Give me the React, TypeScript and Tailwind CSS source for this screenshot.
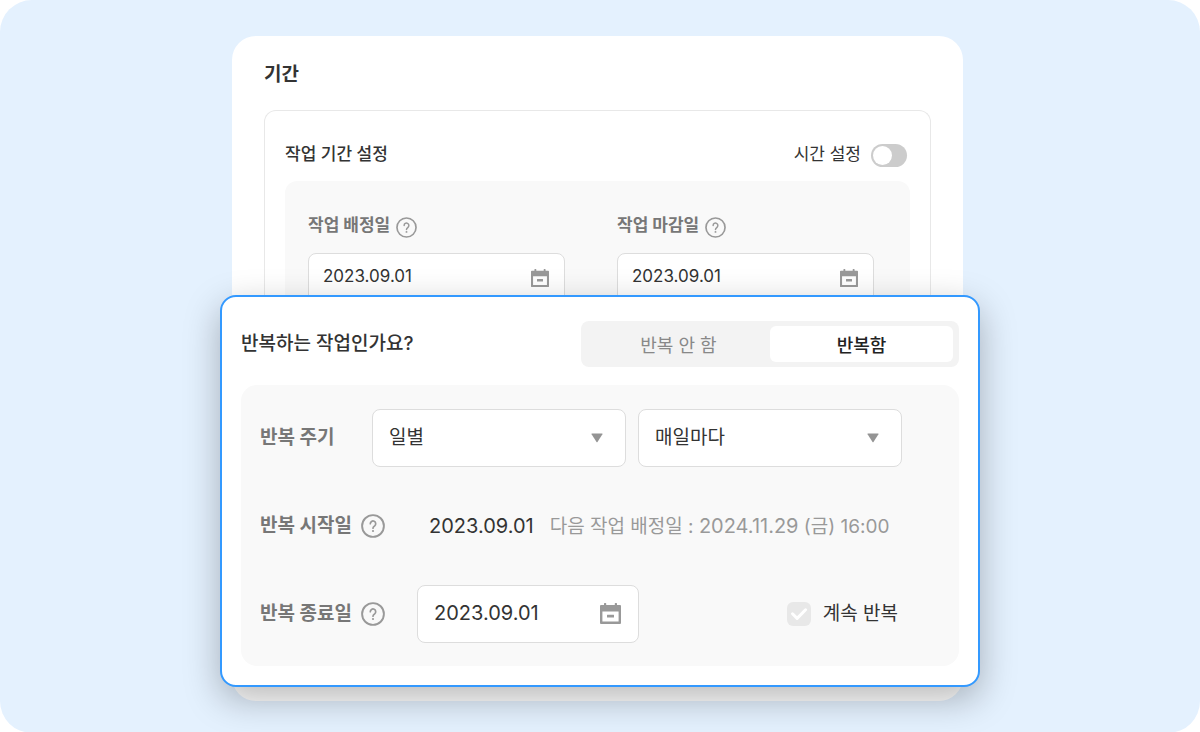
import { useState } from 'react';

function HelpIcon({ className }: { className: string }) {
  return (
    <svg viewBox="0 0 24 24" fill="none" stroke="#999999" className={className}>
      <circle cx="12" cy="12" r="10.9" strokeWidth="1.9" />
      <path
        d="M9.3 9.7a2.7 2.7 0 1 1 4.4 2.1c-1 .8-1.7 1.2-1.7 2.4"
        strokeWidth="1.7"
        strokeLinecap="round"
      />
      <circle cx="12" cy="17" r="1.1" fill="#999999" stroke="none" />
    </svg>
  );
}

function CalendarIcon({ className }: { className: string }) {
  return (
    <svg viewBox="0 0 21 21" fill="#999999" className={className}>
      <path
        fillRule="evenodd"
        d="M4 .6a.6.6 0 0 1 .6-.6h1a.6.6 0 0 1 .6.6V2h8.6V.6a.6.6 0 0 1 .6-.6h1a.6.6 0 0 1 .6.6V2H20a1 1 0 0 1 1 1v17a1 1 0 0 1-1 1H1a1 1 0 0 1-1-1V3a1 1 0 0 1 1-1h3zM2.4 8.6v10h16.2v-10z"
      />
      <rect x="7" y="11.8" width="7" height="2.8" rx="0.3" />
    </svg>
  );
}

function SelectArrow() {
  return (
    <svg
      viewBox="0 0 12 10"
      fill="#949494"
      className="pointer-events-none absolute top-6 right-[23px] h-[10px] w-3"
    >
      <path d="M1 .4h10q.9 0 .4.8L6.5 9q-.5.7-1 0L.6 1.2Q.1.4 1 .4z" />
    </svg>
  );
}

function DateField({ id, label }: { id: string; label: string }) {
  return (
    <div>
      <div className="flex h-6 items-center gap-[6px]">
        <label htmlFor={id} className="pb-1 text-[17px] leading-6 font-bold text-[#777777]">
          {label}
        </label>
        <HelpIcon className="h-[21px] w-[21px]" />
      </div>
      <div className="relative mt-[14px]">
        <input
          id={id}
          type="text"
          defaultValue="2023.09.01"
          className="h-[51px] w-full rounded-lg border border-[#dddddd] bg-white px-[14px] pb-[6px] text-[17px] text-[#333333]"
        />
        <CalendarIcon className="absolute top-4 right-4 h-[18px] w-[18px]" />
      </div>
    </div>
  );
}

const selectClass =
  'h-[58px] w-full appearance-none rounded-lg border border-[#dddddd] bg-white px-4 text-[19px] text-[#333333]';

const segmentClass =
  'h-9 rounded-md pt-[2px] text-[#888888] aria-pressed:bg-white aria-pressed:font-medium aria-pressed:text-[#222222]';

export default function App() {
  const [repeat, setRepeat] = useState(true);

  return (
    <div className="min-h-screen rounded-[32px] bg-[#e4f1fe] px-4 pt-9 pb-8 font-[Inter,'Noto_Sans_CJK_KR',sans-serif] text-[#333333]">
      <div className="mx-auto max-w-[760px]">
        <section className="mr-[17px] ml-3 rounded-3xl bg-white pb-[14px]">
          <div className="px-8 pt-[27px]">
            <h2 className="text-[19px] leading-6 font-bold">기간</h2>
            <div className="mt-[23px] rounded-t-xl border border-b-0 border-[#e8e8e8] px-5">
              <div className="flex h-[70px] items-end justify-between pb-[13px]">
                <h3 className="pb-[2px] text-[17px] leading-6 font-medium">작업 기간 설정</h3>
                <label className="flex items-center gap-[10px] pr-[3px] text-[17px] leading-6">
                  <span className="pb-[2px]">시간 설정</span>
                  <input
                    type="checkbox"
                    role="switch"
                    className="h-[23px] w-9 appearance-none rounded-full bg-[#cccccc] before:mt-[2px] before:ml-[2px] before:block before:h-[19px] before:w-[19px] before:rounded-full before:bg-white checked:bg-[#3399ff] checked:before:ml-[15px]"
                  />
                </label>
              </div>
              <div className="grid grid-cols-2 gap-x-[52px] rounded-t-xl bg-[#f9f9f9] pt-[34px] pr-9 pl-[23px]">
                <DateField id="assign-date" label="작업 배정일" />
                <DateField id="due-date" label="작업 마감일" />
              </div>
            </div>
          </div>

          {/* repeat panel, wider than the card and laid over its lower part */}
          <div className="relative -mt-[9px] -mr-[17px] -ml-3 rounded-2xl border-2 border-[#3399ff] bg-white px-[19px] pt-6 pb-[19px] shadow-[0_12px_36px_rgba(0,0,0,0.28)]">
            <div className="flex items-center justify-between">
              <h3 className="text-[19px] leading-6 font-medium">반복하는 작업인가요?</h3>
              <div className="grid w-[378px] grid-cols-2 rounded-lg bg-[#f3f3f3] px-[6px] py-[5px] text-[18px]">
                <button
                  type="button"
                  aria-pressed={!repeat}
                  onClick={() => setRepeat(false)}
                  className={segmentClass}
                >
                  반복 안 함
                </button>
                <button
                  type="button"
                  aria-pressed={repeat}
                  onClick={() => setRepeat(true)}
                  className={segmentClass}
                >
                  반복함
                </button>
              </div>
            </div>

            <div className="mt-[18px] flex flex-col gap-[30px] rounded-2xl bg-[#f9f9f9] pt-6 pr-[57px] pb-[23px] pl-[19px] text-[19px]">
              <div className="flex items-center">
                <label htmlFor="cycle" className="w-28 font-bold text-[#777777]">
                  반복 주기
                </label>
                <div className="relative w-[254px]">
                  <select id="cycle" className={selectClass}>
                    <option>일별</option>
                  </select>
                  <SelectArrow />
                </div>
                <div className="relative ml-3 flex-1">
                  <select aria-label="반복 간격" className={selectClass}>
                    <option>매일마다</option>
                  </select>
                  <SelectArrow />
                </div>
              </div>

              <div className="flex h-[58px] items-center">
                <div className="flex w-[157px] items-center gap-[9px]">
                  <span className="font-bold text-[#777777]">반복 시작일</span>
                  <HelpIcon className="h-6 w-6" />
                </div>
                <span className="pl-3 text-[20px]">2023.09.01</span>
                <span className="pl-4 text-[#999999]">
                  다음 작업 배정일 : <span className="text-[20px]">2024.11.29</span> (금) 16:00
                </span>
              </div>

              <div className="flex items-center">
                <div className="flex w-[157px] items-center gap-[9px]">
                  <label htmlFor="end-date" className="font-bold text-[#777777]">
                    반복 종료일
                  </label>
                  <HelpIcon className="h-6 w-6" />
                </div>
                <div className="relative w-[222px]">
                  <input
                    id="end-date"
                    type="text"
                    defaultValue="2023.09.01"
                    className="h-[58px] w-full rounded-lg border border-[#dddddd] bg-white px-4 pb-[2px] text-[20px]"
                  />
                  <CalendarIcon className="absolute top-[18px] right-[18px] h-[21px] w-[21px]" />
                </div>
                <label className="mr-1 ml-auto flex items-center gap-3">
                  <span className="grid">
                    <input
                      type="checkbox"
                      defaultChecked
                      disabled
                      className="col-start-1 row-start-1 h-6 w-6 appearance-none rounded-md bg-[#e8e8e8]"
                    />
                    <svg
                      viewBox="0 0 24 24"
                      fill="none"
                      stroke="#ffffff"
                      strokeWidth="3"
                      strokeLinecap="round"
                      strokeLinejoin="round"
                      className="col-start-1 row-start-1 h-6 w-6"
                    >
                      <path d="M5.5 11.8l4.6 4.6L18.6 7.8" />
                    </svg>
                  </span>
                  계속 반복
                </label>
              </div>
            </div>
          </div>
        </section>
      </div>
    </div>
  );
}
